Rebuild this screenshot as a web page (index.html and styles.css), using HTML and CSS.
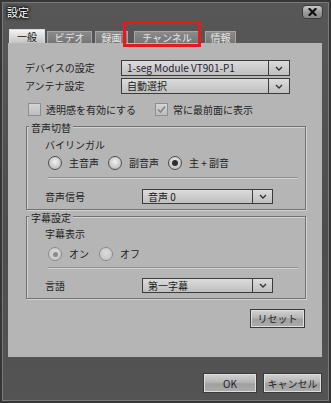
FILE: index.html
```html
<!DOCTYPE html>
<html lang="ja">
<head>
<meta charset="utf-8">
<title>設定</title>
<link rel="stylesheet" href="styles.css">
</head>
<body>
<div class="window">
  <div class="titlebar">
    <span class="title">設定</span>
    <div class="close">
      <svg width="9" height="8" viewBox="0 0 9 8"><path d="M1.5 1 L7.5 7 M7.5 1 L1.5 7" stroke="#111" stroke-width="2.2" stroke-linecap="square"/></svg>
    </div>
  </div>
  <div class="tabs">
    <div class="tab active t-general">一般</div>
    <div class="tab t-video">ビデオ</div>
    <div class="tab t-rec">録画</div>
    <div class="tab t-channel">チャンネル</div>
    <div class="tab t-info">情報</div>
  </div>
  <div class="highlight"></div>
  <div class="panel">
    <div class="row">
      <span class="label">デバイスの設定</span>
      <div class="select wide">
        <span class="value device">1-seg Module VT901-P1</span>
        <span class="arrow"><svg width="8" height="5" viewBox="0 0 8 5"><path d="M1 1 L4 4 L7 1" fill="none" stroke="#333" stroke-width="1.4"/></svg></span>
      </div>
    </div>
    <div class="row row-2">
      <span class="label">アンテナ設定</span>
      <div class="select wide">
        <span class="value">自動選択</span>
        <span class="arrow"><svg width="8" height="5" viewBox="0 0 8 5"><path d="M1 1 L4 4 L7 1" fill="none" stroke="#333" stroke-width="1.4"/></svg></span>
      </div>
    </div>
    <div class="checks">
      <div class="check first">
        <span class="box"></span>
        <span>透明感を有効にする</span>
      </div>
      <div class="check">
        <span class="box"><svg width="11" height="11" viewBox="0 0 11 11"><path d="M2 5.5 L4.5 8 L9 2.5" fill="none" stroke="#858585" stroke-width="1.6"/></svg></span>
        <span>常に最前面に表示</span>
      </div>
    </div>

    <div class="group g-audio">
      <span class="legend">音声切替</span>
      <div class="sub-label">バイリンガル</div>
      <div class="radios">
        <div class="radio-item"><span class="radio"></span><span>主音声</span></div>
        <div class="radio-item"><span class="radio"></span><span>副音声</span></div>
        <div class="radio-item"><span class="radio on"><span class="dot"></span></span><span>主 + 副音</span></div>
      </div>
      <div class="separator"></div>
      <div class="row small">
        <span class="label">音声信号</span>
        <div class="select narrow">
          <span class="value">音声 0</span>
          <span class="arrow"><svg width="8" height="5" viewBox="0 0 8 5"><path d="M1 1 L4 4 L7 1" fill="none" stroke="#333" stroke-width="1.4"/></svg></span>
        </div>
      </div>
    </div>

    <div class="group g-caption">
      <span class="legend">字幕設定</span>
      <div class="sub-label">字幕表示</div>
      <div class="radios disabled">
        <div class="radio-item"><span class="radio on"><span class="dot"></span></span><span>オン</span></div>
        <div class="radio-item"><span class="radio"></span><span>オフ</span></div>
      </div>
      <div class="separator"></div>
      <div class="row small">
        <span class="label">言語</span>
        <div class="select narrow">
          <span class="value">第一字幕</span>
          <span class="arrow"><svg width="8" height="5" viewBox="0 0 8 5"><path d="M1 1 L4 4 L7 1" fill="none" stroke="#333" stroke-width="1.4"/></svg></span>
        </div>
      </div>
    </div>

    <div class="btn reset">リセット</div>
  </div>
  <div class="footer">
    <div class="btn ok">OK</div>
    <div class="btn cancel">キャンセル</div>
  </div>
</div>
</body>
</html>
```
FILE: styles.css
```css
* { box-sizing: border-box; }
html, body { margin: 0; padding: 0; }
body {
  background: #3a3a3a;
  font-family: "Noto Sans CJK JP", "Noto Sans", sans-serif;
  font-size: 10px;
  color: #1e1e1e;
}
.window {
  position: relative;
  width: 331px;
  height: 403px;
  border: 2px solid #363636;
  box-shadow: inset 0 0 0 1px #7a7a7a;
  background: linear-gradient(#575757, #4d4d4d 60%, #545454);
  padding: 0 7px 0 6px;
  display: flex;
  flex-direction: column;
}
.titlebar {
  height: 26px;
  flex: none;
  display: flex;
  justify-content: space-between;
  align-items: flex-start;
  padding-top: 3px;
}
.title {
  color: #fff;
  font-size: 11px;
  line-height: 14px;
  margin-left: -1px;
  text-shadow: 0 0 2px #000, 0 0 3px #000, 0 0 4px #000;
}
.close {
  width: 21px;
  height: 14px;
  margin-right: -1px;
  border: 1px solid #3c3c3c;
  border-radius: 4px;
  background: linear-gradient(#cacaca, #9a9a9a 50%, #888);
  display: flex;
  align-items: center;
  justify-content: center;
}
.tabs {
  height: 15px;
  flex: none;
  display: flex;
  align-items: flex-end;
  gap: 2px;
  padding-left: 1px;
}
.tab {
  height: 12px;
  line-height: 11px;
  text-align: center;
  background: linear-gradient(#8a8a8a, #767676);
  border: 1px solid #a4a4a4;
  border-bottom: none;
  color: #e6e6e6;
  font-size: 10px;
}
.tab.active {
  height: 14px;
  line-height: 13px;
  background: linear-gradient(#f2f2f2, #c4c4c4);
  border-color: #dcdcdc;
  color: #111;
}
.t-general { width: 36px; }
.t-video { width: 45px; }
.t-rec { width: 33px; margin-left: 1px; }
.t-channel { width: 66px; margin-left: 4px; }
.t-info { width: 31px; margin-left: 3px; }
.highlight {
  position: absolute;
  left: 121px;
  top: 19px;
  width: 78px;
  height: 26px;
  border: 3px solid #ea1620;
}
.panel {
  height: 314px;
  flex: none;
  background: #b5b5b5;
  padding: 17px 0 0 17px;
  display: flex;
  flex-direction: column;
}
.row {
  display: flex;
  align-items: center;
  height: 16px;
}
.row-2 { margin-top: 2px; }
.label { width: 96px; line-height: 12px; }
.select {
  display: flex;
  height: 16px;
  border: 1px solid #3c3c3c;
  background: linear-gradient(#dcdcdc, #cdcdcd 50%, #c0c0c0);
}
.select.wide { width: 169px; }
.select.narrow { width: 131px; }
.value {
  flex: 1;
  padding-left: 5px;
  line-height: 14px;
  color: #1a1a1a;
}
.value.device { color: #281c36; }
.arrow {
  width: 21px;
  border-left: 1px solid #3c3c3c;
  display: flex;
  align-items: center;
  justify-content: center;
}
.row.small { height: 15px; margin-top: 10px; }
.row.small .label { width: 97px; }
.row.small .select { height: 15px; }
.row.small .value { line-height: 13px; }
.row.small .arrow { width: 20px; }
.checks {
  margin-top: 9px;
  height: 13px;
  display: flex;
  align-items: center;
}
.check {
  display: flex;
  align-items: center;
  gap: 5px;
  line-height: 12px;
}
.check.first { width: 127px; margin-left: 3px; }
.box {
  width: 13px;
  height: 13px;
  border: 1px solid #8e8e8e;
  background: linear-gradient(#d4d4d4, #bdbdbd);
  display: flex;
  align-items: center;
  justify-content: center;
}
.group {
  margin-left: 1px;
  width: 280px;
  border: 1px solid #727272;
  box-shadow: inset 1px 1px 0 #d2d2d2, 1px 1px 0 #d2d2d2;
  padding: 0 7px 5px 18px;
  display: flex;
  flex-direction: column;
}
.g-audio { margin-top: 10px; }
.g-caption { margin-top: 6px; }
.legend {
  align-self: flex-start;
  margin: -5px 0 0 -16px;
  padding: 0 2px;
  line-height: 12px;
  background: #b5b5b5;
}
.sub-label { line-height: 12px; margin-top: 5px; }
.g-caption .sub-label { margin-top: 4px; }
.radios {
  display: flex;
  align-items: center;
  gap: 9px;
  height: 14px;
  margin-top: 5px;
  padding-left: 3px;
}
.g-caption .radios { margin-top: 7px; gap: 10px; }
.radio-item {
  display: flex;
  align-items: center;
  gap: 7px;
  line-height: 12px;
}
.radio {
  width: 14px;
  height: 14px;
  border-radius: 50%;
  border: 1px solid #4e4e4e;
  background: radial-gradient(circle at 50% 40%, #f2f2f2, #c8c8c8 60%, #b0b0b0);
  display: flex;
  align-items: center;
  justify-content: center;
}
.dot {
  width: 6px;
  height: 6px;
  border-radius: 50%;
  background: #2e2e2e;
}
.radios.disabled .radio { border-color: #8a8a8a; background: radial-gradient(circle at 50% 40%, #dadada, #c2c2c2); }
.radios.disabled .dot { background: #8a8a8a; width: 5px; height: 5px; }
.separator {
  margin-top: 7px;
  margin-left: 3px;
  height: 2px;
  border-top: 1px solid #8e8e8e;
  border-bottom: 1px solid #d0d0d0;
}
.g-caption .separator { margin-top: 6px; }
.g-caption .row.small { margin-top: 9px; }
.btn {
  height: 20px;
  border: 1px solid #3a3a3a;
  box-shadow: inset 0 0 0 1px #dedede;
  background: linear-gradient(#d2d2d2, #b6b6b6 45%, #a0a0a0 55%, #acacac);
  display: flex;
  align-items: center;
  justify-content: center;
  color: #222;
  font-size: 10px;
}
.reset {
  align-self: flex-end;
  margin: 10px 17px 0 0;
  width: 55px;
  height: 19px;
}
.footer {
  margin-top: 16px;
  display: flex;
  justify-content: flex-end;
  gap: 6px;
}
.ok { width: 54px; }
.cancel { width: 59px; }
```
